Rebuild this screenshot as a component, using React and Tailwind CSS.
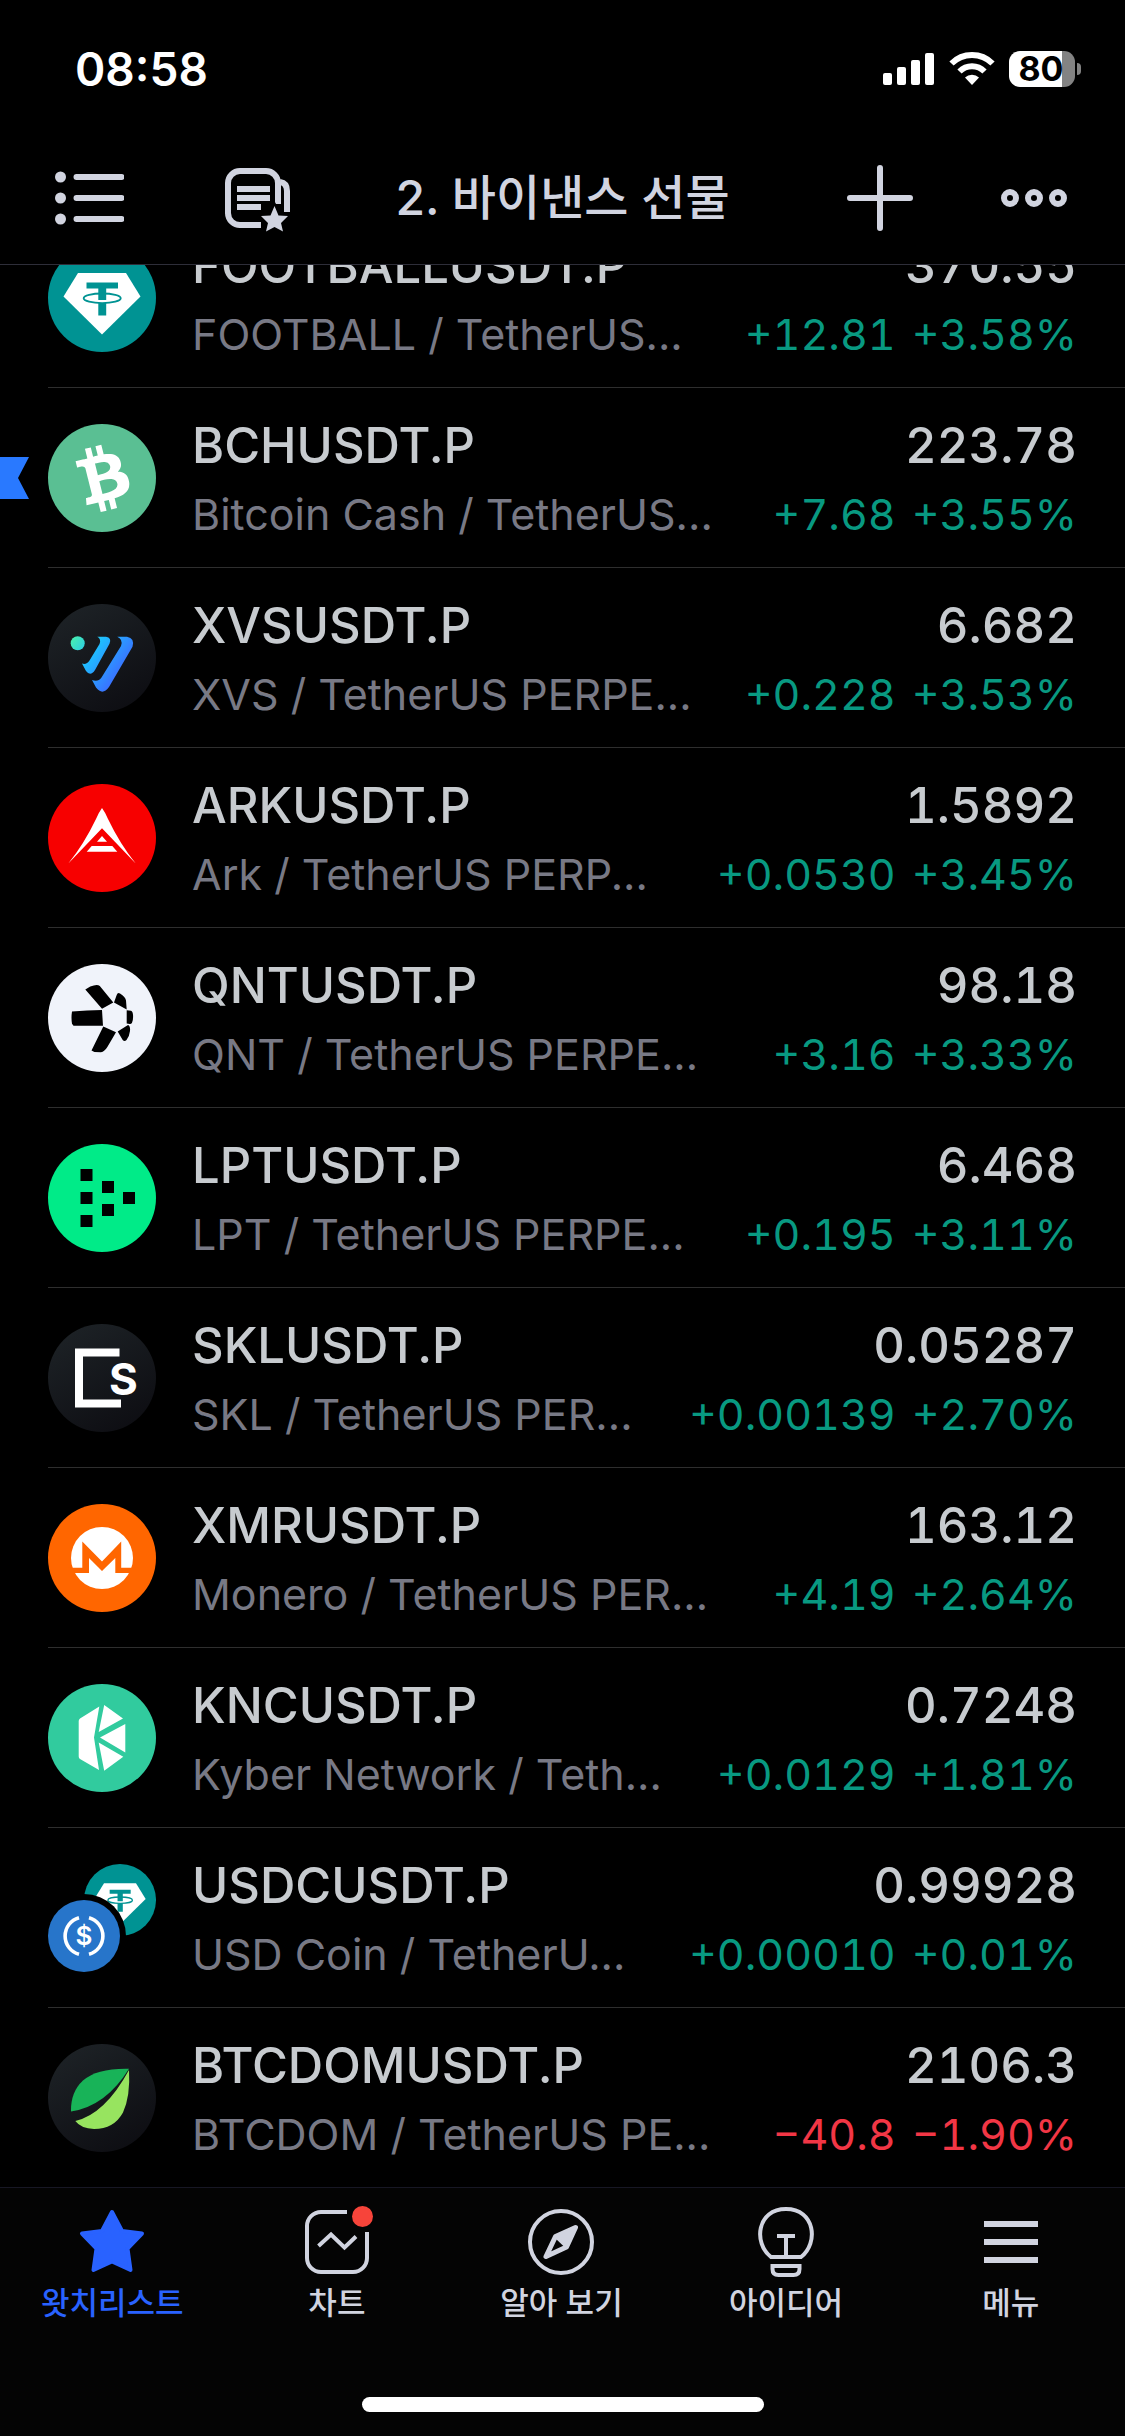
import { useState } from 'react';

function DarkDisc({ id }) {
  return (
    <>
      <defs>
        <linearGradient id={id} x1="0.2" y1="0" x2="0.8" y2="1">
          <stop offset="0" stopColor="#1d2226" />
          <stop offset="1" stopColor="#0d0d12" />
        </linearGradient>
      </defs>
      <circle cx="54" cy="54" r="54" fill={`url(#${id})`} />
    </>
  );
}

function TetherMark() {
  return (
    <>
      <circle cx="54" cy="54" r="54" fill="#009393" />
      <path d="M30 29h48l14.500 23.500L54 90.500 15.500 52.500z" fill="#fff" />
      <path d="M38.500 38.500h31.500v6H58.200V56h-7.900V44.500H38.500zM50.300 59h7.900v12.500h-7.900z" fill="#009393" />
      <ellipse cx="54.200" cy="54.300" rx="18.500" ry="4.800" fill="none" stroke="#009393" strokeWidth="1.900" />
    </>
  );
}

const LOGOS = {
  tether: <TetherMark />,
  bch: (
    <>
      <circle cx="54" cy="54" r="54" fill="#5abf93" />
      <path
        transform="scale(3.375) rotate(-28 16 16)"
        fill="#fff"
        d="M23.189 14.02c.314-2.096-1.283-3.223-3.465-3.975l.708-2.84-1.728-.43-.69 2.765c-.454-.114-.92-.22-1.385-.326l.695-2.783L15.596 6l-.708 2.839c-.376-.086-.746-.17-1.104-.26l.002-.009-2.384-.595-.46 1.846s1.283.294 1.256.312c.7.175.826.638.805 1.006l-.806 3.235c.048.012.11.03.18.057l-.183-.045-1.13 4.532c-.086.212-.303.531-.793.41.018.025-1.256-.313-1.256-.313l-.858 1.978 2.25.561c.418.105.828.215 1.231.318l-.715 2.872 1.727.43.708-2.84c.472.127.93.245 1.378.357l-.706 2.828 1.728.43.715-2.866c2.948.558 5.164.333 6.097-2.333.752-2.146-.037-3.385-1.588-4.192 1.13-.26 1.98-1.003 2.207-2.538zm-3.95 5.538c-.533 2.147-4.148.986-5.32.695l.95-3.805c1.172.293 4.929.872 4.37 3.11zm.535-5.569c-.487 1.953-3.495.96-4.47.717l.86-3.45c.975.243 4.118.696 3.61 2.733z"
      />
    </>
  ),
  xvs: (
    <>
      <DarkDisc id="xvs-disc" />
      <defs>
        <linearGradient id="xvs-mark" gradientUnits="userSpaceOnUse" x1="24" y1="34" x2="76" y2="72">
          <stop offset="0" stopColor="#48efb0" />
          <stop offset="0.4" stopColor="#1fbcff" />
          <stop offset="1" stopColor="#3e66ff" />
        </linearGradient>
      </defs>
      <g fill="url(#xvs-mark)">
        <circle cx="29.700" cy="39.300" r="7" />
        <path d="M49.300 32.700H58q6 1 3.500 7L47 66q-4.500 7-9 1l-4-7.500q4.500 1.500 7.500-3L51.500 40q2-5-2.200-7.300z" />
        <path d="M69.300 32.700H79q8 1.500 5.500 10L61 83q-6.500 9-13 .500L44 76q6 2.500 9.500-2.500L73 42q2.500-6.500-3.700-9.300z" />
      </g>
    </>
  ),
  ark: (
    <>
      <circle cx="54" cy="54" r="54" fill="#f70000" />
      <path
        d="M54 24q3 4 6 11 12 25 27.700 44.500L54 44.300 20.300 79.500Q36 60 48 35q3-7 6-11zM54 52l5 5.700H49zM43.700 62h20.600l5 5.700H38.700z"
        fill="#fff"
      />
    </>
  ),
  qnt: (
    <>
      <circle cx="54" cy="54" r="54" fill="#f0f3fa" />
      <path d="M37.300 25.600l5-3q7-3 9.500-.500l13.500 16.500L54 44.800zM24 47.600q15-1.700 30-1.700l1 15.800H25.500l-1.500-2q-1-6 0-12.100zM55.300 62.400L68 68.300l-8.500 14.500q-3 5-6.500 5.400l-6.500-.2-3-1.500zM66 38.600l2.700-7.600q1-3 3.300-1.500 5.500 3.500 6 7l.7 9zM78.700 46.200l4.300.6q1.700.4 2 4 .4 5-1 8-.8 1.500-2.300 1.300l-3-.5zM69.700 67.600L80 61q2.500 1 2 6-.5 5-3.500 9-2 2-3.800 0z" />
    </>
  ),
  lpt: (
    <>
      <circle cx="54" cy="54" r="54" fill="#00eb88" />
      <path d="M32.500 25h12v12h-12zM32.500 48h12v12h-12zM32.500 71h12v12h-12zM54 37h12v12H54zM54 60h12v12H54zM75 48h12v12H75z" />
    </>
  ),
  skl: (
    <>
      <DarkDisc id="skl-disc" />
      <path d="M75.500 28.500H35v51h42" fill="none" stroke="#fff" strokeWidth="8" transform="translate(-4 0)" />
      <text x="75.500" y="71" textAnchor="middle" fill="#fff" className="font-['Inter',sans-serif] text-[44px] font-bold">
        S
      </text>
    </>
  ),
  xmr: (
    <>
      <circle cx="54" cy="54" r="54" fill="#ff6600" />
      <circle cx="54" cy="54" r="31" fill="#fff" />
      <path d="M20 63.800h14.300V37.500L54 57.500l19.200-20v26.300H90V69H67.300V54L54 67 41 54v15H20z" fill="#ff6600" />
    </>
  ),
  knc: (
    <>
      <circle cx="54" cy="54" r="54" fill="#31cb9e" />
      <path
        d="M51.300 22.500L46 53.500 51 86 32 75q-1.300-1-1.300-2.500V37q0-1.500 1.300-2.500zM56.200 21l18.800 13.500L50.700 48zM77.300 40v28.500L52 53.500zM50.700 58.500l24.600 14.300L56.200 86.800z"
        fill="#fff"
      />
    </>
  ),
  usdc: (
    <>
      <g transform="translate(36 0) scale(0.6667)">
        <TetherMark />
      </g>
      <circle cx="36" cy="72" r="42" fill="#000" />
      <circle cx="36" cy="72" r="36" fill="#2775ca" />
      <path d="M31 53.700a19 19 0 0 0 0 36.600M41 53.700a19 19 0 0 1 0 36.600" fill="none" stroke="#fff" strokeWidth="3.600" />
      <text x="36" y="81" textAnchor="middle" fill="#fff" className="font-['Inter',sans-serif] text-[26px] font-semibold">
        $
      </text>
    </>
  ),
  btcdom: (
    <>
      <DarkDisc id="btcdom-disc" />
      <path d="M81 24.700Q49 24 35 36.500 22.500 48 23 67.500 58 62 81 24.700z" fill="#18b358" />
      <path d="M81 26Q82.500 52 75 68.500 66 85 46 85 33 84.500 27.300 77 57 70 81 26z" fill="#97e45f" />
    </>
  ),
};

const SYMBOLS = [
  { logo: 'tether', symbol: 'FOOTBALLUSDT.P', name: 'FOOTBALL / TetherUS...', price: '370.55', change: '+12.81', percent: '+3.58%' },
  { logo: 'bch', symbol: 'BCHUSDT.P', name: 'Bitcoin Cash / TetherUS...', price: '223.78', change: '+7.68', percent: '+3.55%', flagged: true },
  { logo: 'xvs', symbol: 'XVSUSDT.P', name: 'XVS / TetherUS PERPE...', price: '6.682', change: '+0.228', percent: '+3.53%' },
  { logo: 'ark', symbol: 'ARKUSDT.P', name: 'Ark / TetherUS PERP...', price: '1.5892', change: '+0.0530', percent: '+3.45%' },
  { logo: 'qnt', symbol: 'QNTUSDT.P', name: 'QNT / TetherUS PERPE...', price: '98.18', change: '+3.16', percent: '+3.33%' },
  { logo: 'lpt', symbol: 'LPTUSDT.P', name: 'LPT / TetherUS PERPE...', price: '6.468', change: '+0.195', percent: '+3.11%' },
  { logo: 'skl', symbol: 'SKLUSDT.P', name: 'SKL / TetherUS PER...', price: '0.05287', change: '+0.00139', percent: '+2.70%' },
  { logo: 'xmr', symbol: 'XMRUSDT.P', name: 'Monero / TetherUS PER...', price: '163.12', change: '+4.19', percent: '+2.64%' },
  { logo: 'knc', symbol: 'KNCUSDT.P', name: 'Kyber Network / Teth...', price: '0.7248', change: '+0.0129', percent: '+1.81%' },
  { logo: 'usdc', symbol: 'USDCUSDT.P', name: 'USD Coin / TetherU...', price: '0.99928', change: '+0.00010', percent: '+0.01%' },
  { logo: 'btcdom', symbol: 'BTCDOMUSDT.P', name: 'BTCDOM / TetherUS PE...', price: '2106.3', change: '−40.8', percent: '−1.90%' },
];

const TABS = [
  {
    id: 'watchlist',
    label: '왓치리스트',
    icon: (
      <path
        d="M36 5l10 19 20 2.500-14.500 15L54.500 63 36 54.500 17.500 63l3-21.500L6 26.500 26 24z"
        fill="currentColor"
        stroke="currentColor"
        strokeWidth="4"
        strokeLinejoin="round"
      />
    ),
  },
  {
    id: 'chart',
    label: '차트',
    icon: (
      <>
        <path d="M46 5H20A14 14 0 0 0 6 19v32a14 14 0 0 0 14 14h32a14 14 0 0 0 14-14V25" />
        <path d="M17.500 39L30 27.500l13.500 13 11.500-11" />
        <circle cx="61.500" cy="9.500" r="10.500" fill="#f7443a" stroke="none" />
      </>
    ),
  },
  {
    id: 'explore',
    label: '알아 보기',
    icon: (
      <>
        <circle cx="36" cy="35" r="31" />
        <path d="M50.500 20.500L30.500 29.500 21 49.500 41.500 40z" strokeWidth="5" strokeLinejoin="round" />
        <path d="M50.500 20.500L30.500 29.500 41.500 40z" fill="currentColor" strokeWidth="3" strokeLinejoin="round" />
      </>
    ),
  },
  {
    id: 'ideas',
    label: '아이디어',
    icon: (
      <>
        <path d="M21 50C3 36 7 2 36 2s33 34 15 48z" />
        <path d="M27 29h18M36 29v21M22.500 59h27v3q0 6-6 6h-15q-6 0-6-6z" />
      </>
    ),
  },
  {
    id: 'menu',
    label: '메뉴',
    icon: <path d="M9 17h54M9 35h54M9 53h54" strokeWidth="6" />,
  },
];

function StatusBar() {
  return (
    <div className="flex h-[132px] items-center justify-between pt-1.5 pr-[44px] pl-[75px] text-white">
      <span className="text-[46px] leading-none font-semibold">08:58</span>
      <div className="flex items-center gap-[14px]">
        <svg className="h-9 w-[52px]" viewBox="0 0 52 36" fill="currentColor">
          <rect x="0" y="22" width="9" height="12" rx="2" />
          <rect x="14" y="16" width="9" height="18" rx="2" />
          <rect x="28" y="9" width="9" height="25" rx="2" />
          <rect x="42" y="2" width="9" height="32" rx="2" />
        </svg>
        <svg className="h-9 w-[46px]" viewBox="0 0 46 36" fill="none" stroke="currentColor">
          <path d="M2.500 12.500a29 29 0 0 1 41 0" strokeWidth="6" />
          <path d="M10.500 20.500a17.700 17.700 0 0 1 25 0" strokeWidth="6" />
          <path d="M23 34l-7-7.500a10 10 0 0 1 14 0z" fill="currentColor" stroke="none" />
        </svg>
        <div className="flex items-center gap-0.5">
          <div className="flex h-9 w-[66px] items-center justify-center rounded-[11px] bg-linear-to-r from-white from-80% to-[#838383] to-80% pr-0.5">
            <span className="text-[34px] leading-none font-bold text-black">80</span>
          </div>
          <span className="h-3 w-1 rounded-r-full bg-[#838383]" />
        </div>
      </div>
    </div>
  );
}

function Toolbar() {
  return (
    <header className="grid h-[133px] grid-cols-[1fr_auto_1fr] items-center border-b border-[#2e2e39] text-[#d1d4e0]">
      <div className="flex items-center gap-[100px] pl-[54px]">
        <button type="button" aria-label="목록" className="cursor-pointer">
          <svg className="block h-[70px] w-[70px]" viewBox="0 0 70 70" fill="currentColor">
            <circle cx="6.500" cy="14" r="5.500" />
            <circle cx="6.500" cy="35" r="5.500" />
            <circle cx="6.500" cy="56" r="5.500" />
            <path d="M22.500 14h45M22.500 35h45M22.500 56h45" stroke="currentColor" strokeWidth="6" strokeLinecap="round" />
          </svg>
        </button>
        <button type="button" aria-label="노트" className="cursor-pointer">
          <svg className="block h-[70px] w-[70px]" viewBox="0 0 70 70" fill="none" stroke="currentColor" strokeWidth="6">
            <path d="M37 62H17A12 12 0 0 1 4 50V20A12 12 0 0 1 16 8H42A12 12 0 0 1 54 20V41" />
            <path d="M56 19q7 1 7 9v21" />
            <path d="M13 26h33M13 35h33M13 44h24" />
            <path
              d="M50.500 38l6 12 13 1.500-9.500 9 2.500 13-12-6-12 6 2.500-13-9.500-9 13-1.500z"
              fill="#000"
              stroke="none"
            />
            <path
              d="M50.500 43l4 9.500 9.500.500-7 7 2 8.500-8.500-4.500-8.500 4.500 2-8.500-7-7 9.500-.500z"
              fill="currentColor"
              stroke="none"
            />
          </svg>
        </button>
      </div>
      <h1 className="text-[48px] leading-none font-medium">2. 바이낸스 선물</h1>
      <div className="flex items-center justify-end gap-[84px] pr-[56px]">
        <button type="button" aria-label="심볼 추가" className="cursor-pointer">
          <svg className="block h-[70px] w-[70px]" viewBox="0 0 70 70" stroke="currentColor" strokeWidth="6" strokeLinecap="round">
            <path d="M35 5v60M5 35h60" />
          </svg>
        </button>
        <button type="button" aria-label="더 보기" className="cursor-pointer">
          <svg className="block h-[70px] w-[70px]" viewBox="0 0 70 70" fill="none" stroke="currentColor" strokeWidth="6">
            <circle cx="11" cy="35" r="6" />
            <circle cx="35" cy="35" r="6" />
            <circle cx="59" cy="35" r="6" />
          </svg>
        </button>
      </div>
    </header>
  );
}

function SymbolRow({ item }) {
  const falling = item.change.startsWith('−');

  return (
    <li className="group relative shrink-0 pl-12">
      {item.flagged && (
        <svg className="absolute top-[69px] left-0 h-[42px] w-[29px]" viewBox="0 0 29 42" fill="#2979ff">
          <path d="M0 0h29L18 21l11 21H0z" />
        </svg>
      )}
      <div className="flex h-[180px] items-center gap-9 border-b border-[#2e2e2e] pr-12 group-last:h-[179px] group-last:border-b-0">
        <svg className="size-[108px] shrink-0" viewBox="0 0 108 108">
          {LOGOS[item.logo]}
        </svg>
        <div className="min-w-0 flex-1 pt-1 whitespace-nowrap">
          <div className="flex justify-between text-[49px] leading-[68px] font-medium text-[#c7cbcf]">
            <span>{item.symbol}</span>
            <span className="tabular-nums">{item.price}</span>
          </div>
          <div className="flex justify-between text-[43px] leading-[68px]">
            <span className="text-[#787985]">{item.name}</span>
            <span className={`flex gap-4 tabular-nums ${falling ? 'text-[#f23645]' : 'text-[#089981]'}`}>
              <span>{item.change}</span>
              <span>{item.percent}</span>
            </span>
          </div>
        </div>
      </div>
    </li>
  );
}

export default function App() {
  const [activeTab, setActiveTab] = useState('watchlist');

  return (
    <div className="flex h-screen flex-col bg-black font-['Inter','Noto_Sans_CJK_KR',sans-serif]">
      <StatusBar />
      <Toolbar />

      {/* scrolled to the end, so the first row slides under the toolbar */}
      <main className="flex min-h-0 flex-1 flex-col justify-end overflow-hidden">
        <ul>
          {SYMBOLS.map((item) => (
            <SymbolRow key={item.symbol} item={item} />
          ))}
        </ul>
      </main>

      <nav className="border-t border-[#171724] bg-[#040404]">
        <div className="grid grid-cols-5 pt-[19px] pr-0.5">
          {TABS.map((tab) => (
            <button
              key={tab.id}
              type="button"
              onClick={() => setActiveTab(tab.id)}
              className={`flex cursor-pointer flex-col items-center gap-2 ${activeTab === tab.id ? 'text-[#2962ff]' : 'text-[#d1d4e0]'}`}
            >
              <svg className="h-[70px] w-[72px] overflow-visible" viewBox="0 0 72 70" fill="none" stroke="currentColor" strokeWidth="4">
                {tab.icon}
              </svg>
              <span className="text-[31px] leading-[36px] font-medium">{tab.label}</span>
            </button>
          ))}
        </div>
        <div className="flex justify-center pt-[76px] pb-6">
          <span className="h-[15px] w-[402px] rounded-full bg-white" />
        </div>
      </nav>
    </div>
  );
}
